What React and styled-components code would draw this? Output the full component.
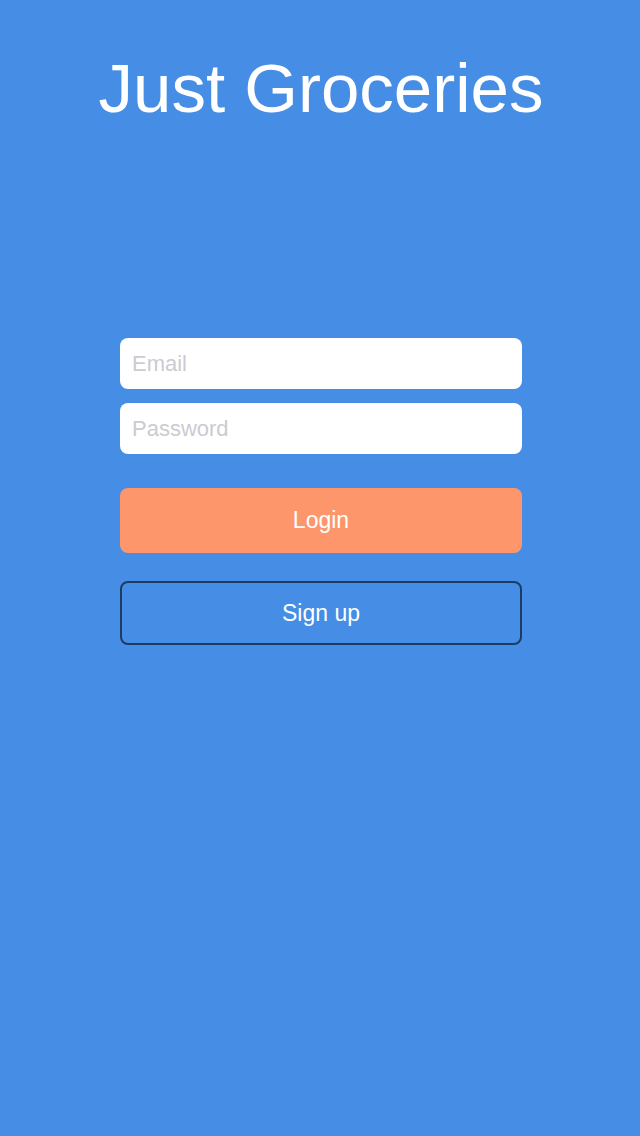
import React from "react";
import styled, { createGlobalStyle } from "styled-components";

const GlobalStyle = createGlobalStyle`
  html, body {
    margin: 0;
    padding: 0;
    background: #468ee5;
  }
  body {
    font-family: "Liberation Sans", Arial, sans-serif;
  }
`;

const Screen = styled.div`
  width: 640px;
  min-height: 1136px;
  background: #468ee5;
  display: flex;
  flex-direction: column;
  align-items: center;
  box-sizing: border-box;
  padding: 51px 0 0 2px;
`;

const Title = styled.h1`
  margin: 0;
  color: #ffffff;
  font-weight: normal;
  font-size: 69px;
  line-height: 76px;
  letter-spacing: 0;
`;

const Form = styled.form`
  width: 402px;
  margin-top: 211px;
  display: flex;
  flex-direction: column;
`;

const Field = styled.input`
  height: 51px;
  box-sizing: border-box;
  border: none;
  border-radius: 8px;
  background: #ffffff;
  padding: 0 12px;
  font-family: inherit;
  font-size: 22px;
  color: #333;
  outline: none;
  margin-bottom: ${(p) => p.$gap || 0}px;

  &::placeholder {
    color: #cbcbd1;
  }
`;

const Button = styled.button`
  height: ${(p) => (p.$outline ? 64 : 65)}px;
  box-sizing: border-box;
  border-radius: 8px;
  font-family: inherit;
  font-size: 23px;
  color: #ffffff;
  cursor: pointer;
  background: ${(p) => (p.$outline ? "transparent" : "#fe966b")};
  border: ${(p) => (p.$outline ? "2px solid #1e3c63" : "none")};
  margin-top: ${(p) => p.$top}px;
`;

export default function App() {
  return (
    <>
      <GlobalStyle />
      <Screen>
        <Title>Just Groceries</Title>
        <Form onSubmit={(e) => e.preventDefault()}>
          <Field type="email" placeholder="Email" $gap={14} />
          <Field type="password" placeholder="Password" />
          <Button type="submit" $top={34}>
            Login
          </Button>
          <Button type="button" $outline $top={28}>
            Sign up
          </Button>
        </Form>
      </Screen>
    </>
  );
}
